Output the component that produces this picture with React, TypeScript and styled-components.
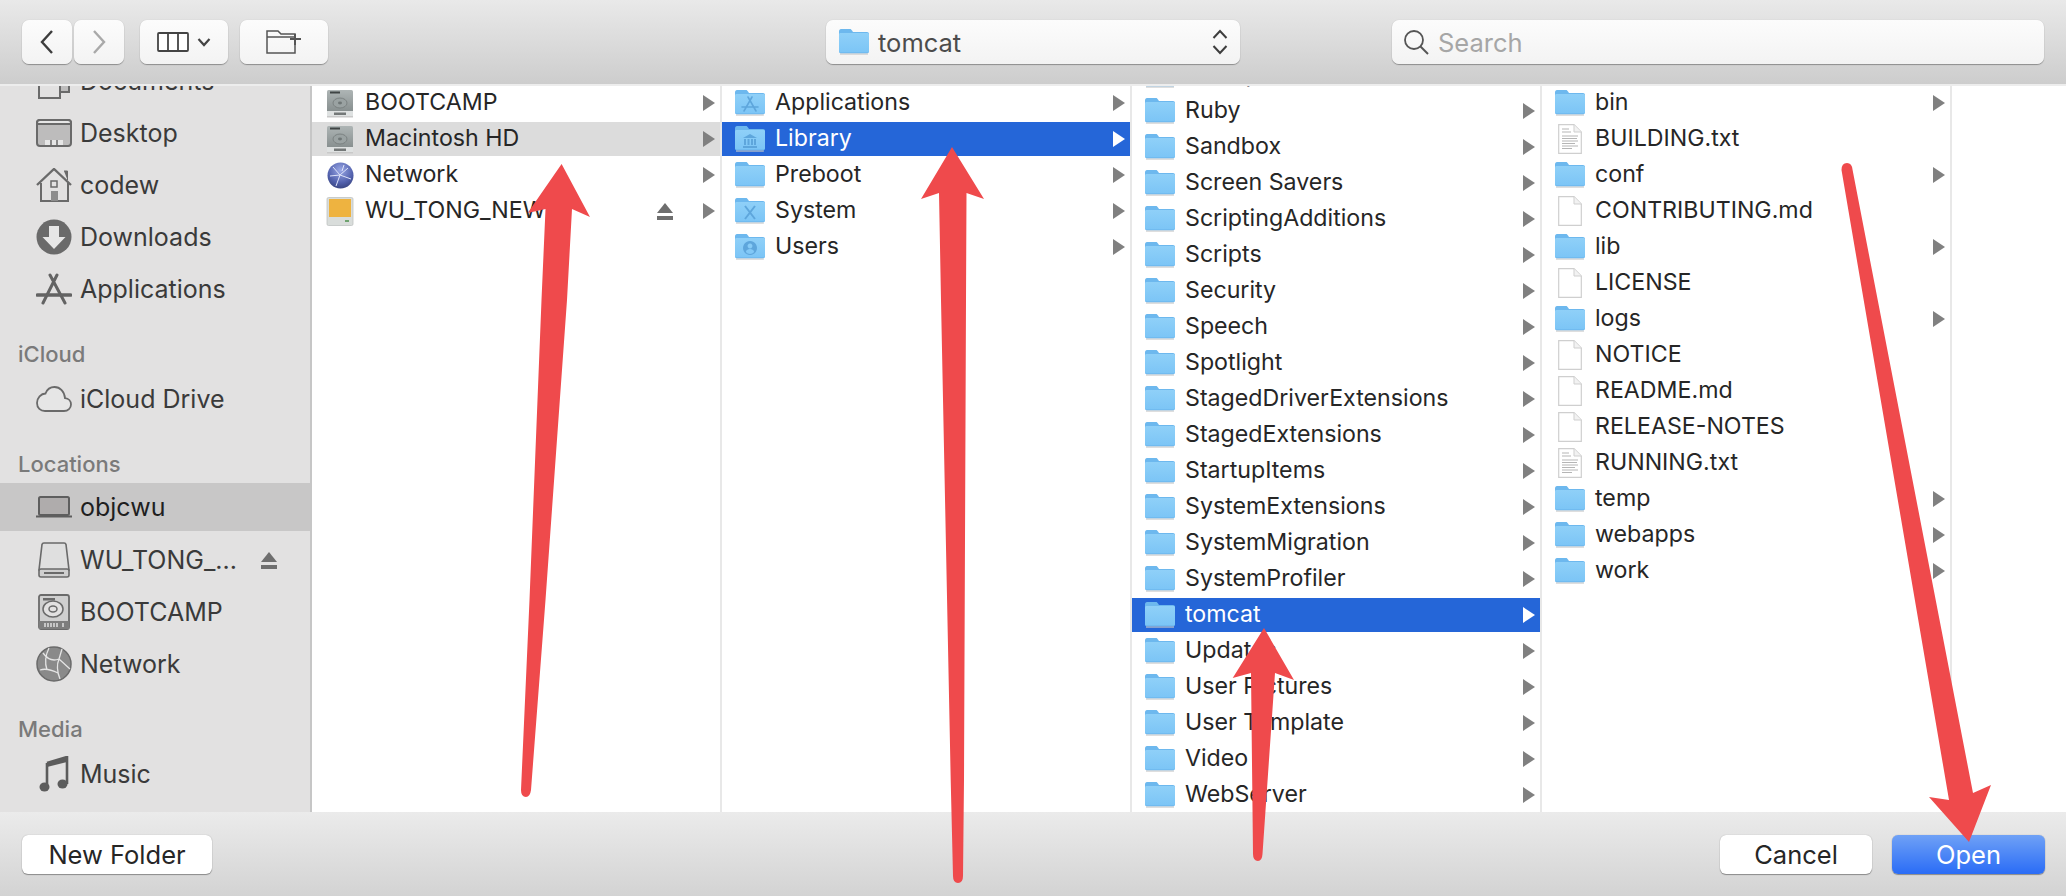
import React, { FunctionComponent, ReactNode } from 'react';
import styled, { createGlobalStyle } from 'styled-components';

const GlobalStyle = createGlobalStyle`
  html, body {
    margin: 0;
    padding: 0;
    background: #e2e1e1;
  }
  * {
    box-sizing: border-box;
  }
`;

const Window = styled.div`
  position: relative;
  width: 2066px;
  height: 896px;
  display: flex;
  flex-direction: column;
  overflow: hidden;
  font-family: Inter, "Liberation Sans", sans-serif;
`;

const Toolbar = styled.div`
  flex: none;
  height: 86px;
  display: flex;
  align-items: flex-start;
  padding: 20px 22px 0;
  background: linear-gradient(#e9e9e9, #cdcdcd);
  border-bottom: 2px solid #ededed;
  position: relative;
  z-index: 2;
`;

const ToolButton = styled.div<{ $width: number; $gap?: number }>`
  flex: none;
  width: ${({ $width }) => $width}px;
  height: 44px;
  margin-right: ${({ $gap }) => $gap ?? 0}px;
  display: flex;
  align-items: center;
  justify-content: center;
  gap: 8px;
  border-radius: 7px;
  background: linear-gradient(#fcfcfc, #f3f3f3);
  box-shadow: 0 1px 1px rgba(0, 0, 0, 0.32), 0 0 1px rgba(0, 0, 0, 0.18);
`;

const PathPopup = styled(ToolButton)`
  justify-content: flex-start;
  padding: 0 12px 0 13px;
  gap: 9px;
  margin-left: 498px;
  margin-right: 152px;
`;

const PathLabel = styled.span`
  flex: 1;
  font-size: 25.5px;
  color: #4c4c4c;
`;

const SearchBox = styled(ToolButton)`
  justify-content: flex-start;
  padding-left: 11px;
  gap: 9px;
`;

const SearchHint = styled.span`
  font-size: 25.5px;
  color: #a6a6a6;
`;

const Body = styled.div`
  flex: 1;
  min-height: 0;
  display: flex;
  background: #fff;
`;

const Sidebar = styled.div`
  flex: none;
  width: 312px;
  overflow: hidden;
  background: #e2e1e1;
  border-right: 2px solid #c6c6c6;
`;

const SidebarList = styled.div`
  margin-top: -31px;
`;

const SectionTitle = styled.div`
  height: 28px;
  line-height: 28px;
  margin: 25px 0 5px;
  padding-left: 18px;
  font-size: 22px;
  font-weight: 500;
  color: #7a7a7a;
`;

const SideRow = styled.div<{ $selected?: boolean }>`
  height: ${({ $selected }) => ($selected ? 48 : 52)}px;
  display: flex;
  align-items: center;
  padding-left: 36px;
  background: ${({ $selected }) => ($selected ? '#c8c7c7' : 'transparent')};
  margin: ${({ $selected }) => ($selected ? '1px 0 3px' : '0')};
`;

const SideIcon = styled.span`
  flex: none;
  width: 36px;
  height: 36px;
  margin-right: 8px;
  display: flex;
  align-items: center;
  justify-content: center;
`;

const SideLabel = styled.span<{ $selected?: boolean }>`
  flex: none;
  width: 181px;
  font-size: 25px;
  color: ${({ $selected }) => ($selected ? '#1f1f1f' : '#3a3a3a')};
`;

const ColumnStrip = styled.div`
  flex: 1;
  min-width: 0;
  display: flex;
`;

const Column = styled.div<{ $offset?: number }>`
  flex: none;
  width: 410px;
  height: 100%;
  overflow: hidden;
  border-right: 2px solid #e8e8e8;
  > div:first-child {
    margin-top: ${({ $offset }) => $offset ?? 0}px;
  }
`;

const FileRow = styled.div<{ $state?: 'active' | 'inactive' }>`
  height: 34px;
  margin-bottom: 2px;
  display: flex;
  align-items: center;
  padding-left: 13px;
  padding-right: 5px;
  background: ${({ $state }) =>
    $state === 'active' ? '#2566d8' : $state === 'inactive' ? '#dcdcdc' : 'transparent'};
`;

const RowIcon = styled.span`
  flex: none;
  width: 30px;
  height: 30px;
  margin-right: 10px;
  display: flex;
  align-items: center;
  justify-content: center;
`;

const RowLabel = styled.span<{ $active?: boolean }>`
  flex: 1;
  min-width: 0;
  font-size: 23.2px;
  position: relative;
  top: -1px;
  white-space: nowrap;
  color: ${({ $active }) => ($active ? '#fff' : '#262626')};
`;

const Disclosure = styled.span<{ $active?: boolean }>`
  flex: none;
  width: 0;
  height: 0;
  border-style: solid;
  border-width: 8px 0 8px 12px;
  border-color: transparent transparent transparent ${({ $active }) => ($active ? '#fff' : '#808080')};
`;

const RowEject = styled.span`
  flex: none;
  margin-right: 30px;
  display: flex;
`;

const Footer = styled.div`
  flex: none;
  height: 84px;
  display: flex;
  align-items: flex-start;
  padding: 23px 21px 0 22px;
  background: linear-gradient(#ebebeb, #d3d3d3);
  position: relative;
  z-index: 2;
`;

const PushButton = styled.div<{ $width: number; $primary?: boolean }>`
  flex: none;
  width: ${({ $width }) => $width}px;
  height: 39px;
  display: flex;
  align-items: center;
  justify-content: center;
  border-radius: 6px;
  font-size: 25.5px;
  color: ${({ $primary }) => ($primary ? '#fff' : '#262626')};
  background: ${({ $primary }) => ($primary ? 'linear-gradient(#6fa1f6, #2a6cf6)' : '#fff')};
  box-shadow: 0 1px 1px rgba(0, 0, 0, 0.35), 0 0 1px rgba(0, 0, 0, 0.3);
`;

const FooterGap = styled.div`
  flex: 1;
`;

const CancelButton = styled(PushButton)`
  margin-right: 20px;
`;

const Annotations = styled.svg`
  position: absolute;
  left: 0;
  top: 0;
  z-index: 5;
  pointer-events: none;
`;

const Eject: FunctionComponent = () => (
  <svg width="16" height="17" viewBox="0 0 16 17">
    <path d="M8 0 16 10H0Z" fill="#6e6e6e" />
    <rect y="13" width="16" height="4" fill="#6e6e6e" />
  </svg>
);

// folder badge glyphs, drawn in a darker blue on the folder front
const badges: Record<string, ReactNode> = {
  apps: (
    <g stroke="#5ea6dc" strokeWidth="1.6" fill="none" strokeLinecap="round">
      <path d="M13 7 21 21M17 7 9 21M7 17H23" />
    </g>
  ),
  library: (
    <g fill="#5ea6dc">
      <path d="M15 8 22 12H8Z" />
      <rect x="9" y="13" width="2" height="6" />
      <rect x="12.5" y="13" width="2" height="6" />
      <rect x="16" y="13" width="2" height="6" />
      <rect x="19" y="13" width="2" height="6" />
      <rect x="8" y="20" width="14" height="2" />
    </g>
  ),
  system: <path d="M10 8 20 21M20 8 10 21" stroke="#5ea6dc" strokeWidth="2" fill="none" />,
  users: (
    <g fill="#5ea6dc">
      <path d="M15 7a7 7 0 1 0 .01 0Zm0 2.600a2.400 2.400 0 1 1-.01 0ZM10.800 18c.6-2.200 2.200-3 4.200-3s3.600.8 4.200 3a5.600 5.600 0 0 1-8.400 0Z" fillRule="evenodd" />
    </g>
  ),
};

const Folder: FunctionComponent<{ badge?: string }> = ({ badge }) => (
  <svg width="30" height="26" viewBox="0 0 30 26">
    <defs>
      <linearGradient id="folderFace" x1="0" y1="0" x2="0" y2="1">
        <stop offset="0" stopColor="#8fd0f8" />
        <stop offset="1" stopColor="#7cc5f6" />
      </linearGradient>
    </defs>
    <path d="M1 24.400h28v1.200H1Z" fill="#c8c8c8" />
    <path d="M0 2.500C0 1 .8 0 2 0h9c1 0 1.400.7 2 1.600L14 3h14c1.200 0 2 .8 2 2v17.500c0 1-.7 1.700-1.700 1.700H1.700C.7 24.200 0 23.500 0 22.500Z" fill="#6db8ee" />
    <path d="M0 5.500C0 4.500.7 4 1.700 4H28.300c1 0 1.700.5 1.700 1.500V22c0 .8-.6 1.300-1.500 1.300H1.500C.6 23.300 0 22.800 0 22Z" fill="url(#folderFace)" />
    {badge && badges[badge]}
  </svg>
);

const Page: FunctionComponent<{ lines?: boolean }> = ({ lines }) => (
  <svg width="24" height="30" viewBox="0 0 24 30">
    <path d="M.7.7H16L23.300 8V29.300H.7Z" fill="#fff" stroke="#cfcfcf" strokeWidth="1.200" />
    <path d="M16 .7V8H23.300" fill="#f2f2f2" stroke="#cfcfcf" strokeWidth="1" />
    {lines && (
      <g stroke="#b5b5b5" strokeWidth="1">
        <path d="M4 5H11M4 8H13M4 12H20M4 14.500H19M4 17H20M4 19.500H17M4 22H20M4 24.500H14" />
      </g>
    )}
  </svg>
);

const HardDisk: FunctionComponent = () => (
  <svg width="28" height="29" viewBox="0 0 28 29">
    <defs>
      <linearGradient id="diskFace" x1="0" y1="0" x2="0" y2="1">
        <stop offset="0" stopColor="#aeb5b5" />
        <stop offset="1" stopColor="#7f8787" />
      </linearGradient>
    </defs>
    <rect x="1" y="1" width="26" height="26" rx="1.500" fill="url(#diskFace)" />
    <rect x="4" y="2.500" width="10" height="2" fill="#3f4444" />
    <ellipse cx="14" cy="14" rx="7" ry="5" fill="#9aa2a2" stroke="#737a7a" strokeWidth="0.800" />
    <ellipse cx="14" cy="14" rx="2" ry="1.400" fill="#6f7676" />
    <rect x="1" y="22" width="26" height="5" fill="#dfe2e2" />
    <path d="M9 23.500v2.500M11 23.500v2.500M13 23.500v2.500M15 23.500v2.500M17 23.500v2.500M19 23.500v2.500" stroke="#2e3333" strokeWidth="1.200" />
    <rect x="1" y="27" width="26" height="1.500" fill="#c9c9c9" />
  </svg>
);

const Globe: FunctionComponent = () => (
  <svg width="27" height="27" viewBox="0 0 27 27">
    <defs>
      <radialGradient id="globeFace" cx="0.5" cy="0.3" r="0.8">
        <stop offset="0" stopColor="#9aa8e6" />
        <stop offset="0.6" stopColor="#5261ad" />
        <stop offset="1" stopColor="#2f3a70" />
      </radialGradient>
    </defs>
    <circle cx="13.500" cy="13.500" r="13" fill="url(#globeFace)" />
    <path d="M6 5 13 13 21 6M13 13 9 24M13 13 24 17M3 14 13 13M17 3 15 9" stroke="#dfe4fa" strokeWidth="1" fill="none" />
  </svg>
);

const OrangeDrive: FunctionComponent = () => (
  <svg width="28" height="29" viewBox="0 0 28 29">
    <rect x="1" y="0.500" width="26" height="28" rx="1.500" fill="#d9dddb" stroke="#bfc3c1" strokeWidth="0.800" />
    <rect x="3" y="2" width="22" height="18" fill="#eeb340" />
    <rect x="19" y="23" width="4" height="2" fill="#6fa36f" />
  </svg>
);

const DesktopGlyph: FunctionComponent = () => (
  <svg width="36" height="28" viewBox="0 0 36 28">
    <rect x="1" y="1" width="34" height="26" rx="3" fill="#bdbcbc" stroke="#6a6a6a" strokeWidth="2" />
    <path d="M1 4a3 3 0 0 1 3-3h28a3 3 0 0 1 3 3v1H1Z" fill="#e6e6e6" stroke="#6a6a6a" strokeWidth="2" />
    <rect x="9" y="21" width="18" height="5" fill="#e6e6e6" />
    <path d="M15 21v5M21 21v5" stroke="#6a6a6a" strokeWidth="1.500" />
  </svg>
);

const HomeGlyph: FunctionComponent = () => (
  <svg width="36" height="34" viewBox="0 0 36 34">
    <path d="M1 17 18 1 35 17" fill="none" stroke="#6a6a6a" strokeWidth="2.400" />
    <path d="M28 3h3.500v9" fill="#6a6a6a" stroke="#6a6a6a" strokeWidth="1" />
    <path d="M5 15v18H32V15" fill="none" stroke="#6a6a6a" strokeWidth="2" />
    <rect x="15" y="13" width="6" height="6" fill="none" stroke="#6a6a6a" strokeWidth="1.500" />
    <rect x="15" y="23" width="7" height="10" fill="#8c8c8c" />
  </svg>
);

const DownloadsGlyph: FunctionComponent = () => (
  <svg width="36" height="36" viewBox="0 0 36 36">
    <circle cx="18" cy="18" r="17.500" fill="#6a6a6a" />
    <path d="M13 7h10v11h6.500L18 30 6.500 18H13Z" fill="#e6e6e6" />
  </svg>
);

const AppsGlyph: FunctionComponent = () => (
  <svg width="36" height="33" viewBox="0 0 36 33">
    <g stroke="#636363" strokeWidth="3" strokeLinecap="round" fill="none">
      <path d="M14 2 29 30M21 2 7 30" />
      <path d="M1.500 22H34.500" strokeWidth="3.600" />
    </g>
  </svg>
);

const DocumentsGlyph: FunctionComponent = () => (
  <svg width="34" height="36" viewBox="0 0 34 36">
    <path d="M11 2H24L32 10V29H11Z" fill="#bdbcbc" stroke="#6a6a6a" strokeWidth="2" />
    <path d="M2 8H15L23 16V35H2Z" fill="#e2e1e1" stroke="#6a6a6a" strokeWidth="2" />
  </svg>
);

const CloudGlyph: FunctionComponent = () => (
  <svg width="36" height="26" viewBox="0 0 36 26">
    <path d="M9 25H28C32 25 35 22 35 18.500C35 15 32.500 12.500 29 12.200C28.500 5.500 24 1 18.500 1C14 1 11 3.500 9.500 7.500C5 7.500 1 12 1 17C1 22 4.500 25 9 25Z" fill="#e6e6e6" stroke="#6a6a6a" strokeWidth="1.800" />
  </svg>
);

const LaptopGlyph: FunctionComponent = () => (
  <svg width="36" height="22" viewBox="0 0 36 22">
    <rect x="3" y="1" width="30" height="18" rx="1.500" fill="#afacac" stroke="#5e5e5e" strokeWidth="2" />
    <path d="M0 20.500H36" stroke="#5e5e5e" strokeWidth="2" />
  </svg>
);

const RemovableGlyph: FunctionComponent = () => (
  <svg width="32" height="36" viewBox="0 0 32 36">
    <path d="M4 2.500A2 2 0 0 1 6 1H26A2 2 0 0 1 28 2.500L31 28H1Z" fill="#dfdfdf" stroke="#6a6a6a" strokeWidth="1.600" />
    <rect x="1" y="27" width="30" height="8" rx="2" fill="#cfcfcf" stroke="#6a6a6a" strokeWidth="1.600" />
    <rect x="6" y="30" width="20" height="2" fill="#6a6a6a" />
  </svg>
);

const DiskGlyph: FunctionComponent = () => (
  <svg width="32" height="36" viewBox="0 0 32 36">
    <rect x="1" y="1" width="30" height="34" rx="2" fill="#cfcfcf" stroke="#6a6a6a" strokeWidth="1.800" />
    <rect x="5" y="4" width="12" height="2.500" fill="#6a6a6a" />
    <ellipse cx="15" cy="15" rx="10" ry="8" fill="#e2e1e1" stroke="#6a6a6a" strokeWidth="1.500" />
    <ellipse cx="15" cy="15" rx="4" ry="3" fill="none" stroke="#6a6a6a" strokeWidth="1.500" />
    <rect x="1" y="27" width="30" height="8" fill="#7d7d7d" />
    <path d="M7 29v4M10 29v4M13 29v4M16 29v4M19 29v4M25 29v4" stroke="#dedede" strokeWidth="1.500" />
  </svg>
);

const NetworkGlyph: FunctionComponent = () => (
  <svg width="36" height="36" viewBox="0 0 36 36">
    <circle cx="18" cy="18" r="17" fill="#8a8a8a" stroke="#6a6a6a" strokeWidth="1.500" />
    <path d="M7 7C12 14 18 15 23 13M23 13 26 3M23 13C20 20 22 28 24 33M23 13 34 23M4 24C10 22 16 24 22 27M13 2C9 10 9 18 11 24" stroke="#e4e4e4" strokeWidth="1.300" fill="none" />
  </svg>
);

const MusicGlyph: FunctionComponent = () => (
  <svg width="30" height="36" viewBox="0 0 30 36">
    <path d="M8 7 28 1V28" fill="none" stroke="#5c5c5c" strokeWidth="2.600" />
    <path d="M8 7 28 1V6L8 11Z" fill="#5c5c5c" />
    <path d="M8 7V32" stroke="#5c5c5c" strokeWidth="2.600" />
    <ellipse cx="5.500" cy="31" rx="5" ry="4.500" fill="#5c5c5c" />
    <ellipse cx="23.500" cy="28" rx="5" ry="4.500" fill="#5c5c5c" />
  </svg>
);

interface Entry {
  name: string;
  icon?: ReactNode;
  more?: boolean;
  state?: 'active' | 'inactive';
  eject?: boolean;
}

const folder = (name: string, state?: 'active' | 'inactive', badge?: string): Entry => ({
  name,
  state,
  more: true,
  icon: <Folder badge={badge} />,
});

const volumes: Entry[] = [
  { name: 'BOOTCAMP', icon: <HardDisk />, more: true },
  { name: 'Macintosh HD', icon: <HardDisk />, more: true, state: 'inactive' },
  { name: 'Network', icon: <Globe />, more: true },
  { name: 'WU_TONG_NEW', icon: <OrangeDrive />, more: true, eject: true },
];

const rootFolders: Entry[] = [
  folder('Applications', undefined, 'apps'),
  folder('Library', 'active', 'library'),
  folder('Preboot'),
  folder('System', undefined, 'system'),
  folder('Users', undefined, 'users'),
];

const libraryFolders: Entry[] = [
  folder('Receipts'),
  folder('Ruby'),
  folder('Sandbox'),
  folder('Screen Savers'),
  folder('ScriptingAdditions'),
  folder('Scripts'),
  folder('Security'),
  folder('Speech'),
  folder('Spotlight'),
  folder('StagedDriverExtensions'),
  folder('StagedExtensions'),
  folder('StartupItems'),
  folder('SystemExtensions'),
  folder('SystemMigration'),
  folder('SystemProfiler'),
  folder('tomcat', 'active'),
  folder('Updates'),
  folder('User Pictures'),
  folder('User Template'),
  folder('Video'),
  folder('WebServer'),
];

const doc = (name: string, lines?: boolean): Entry => ({ name, icon: <Page lines={lines} /> });

const tomcatFiles: Entry[] = [
  folder('bin'),
  doc('BUILDING.txt', true),
  folder('conf'),
  doc('CONTRIBUTING.md'),
  folder('lib'),
  doc('LICENSE'),
  folder('logs'),
  doc('NOTICE'),
  doc('README.md'),
  doc('RELEASE-NOTES'),
  doc('RUNNING.txt', true),
  folder('temp'),
  folder('webapps'),
  folder('work'),
];

const BrowserColumn: FunctionComponent<{ entries: Entry[]; offset?: number }> = ({ entries, offset }) => (
  <Column $offset={offset}>
    {entries.map((entry) => (
      <FileRow key={entry.name} $state={entry.state}>
        <RowIcon>{entry.icon}</RowIcon>
        <RowLabel $active={entry.state === 'active'}>{entry.name}</RowLabel>
        {entry.eject && (
          <RowEject>
            <Eject />
          </RowEject>
        )}
        {entry.more && <Disclosure $active={entry.state === 'active'} />}
      </FileRow>
    ))}
  </Column>
);

const SideItem: FunctionComponent<{ icon: ReactNode; label: string; selected?: boolean; eject?: boolean }> = ({
  icon,
  label,
  selected,
  eject,
}) => (
  <SideRow $selected={selected}>
    <SideIcon>{icon}</SideIcon>
    <SideLabel $selected={selected}>{label}</SideLabel>
    {eject && <Eject />}
  </SideRow>
);

const App: FunctionComponent = () => (
  <Window>
    <GlobalStyle />
    <Toolbar>
      <ToolButton $width={50} $gap={2}>
        <svg width="16" height="26" viewBox="0 0 16 26">
          <path d="M13 2 3 13l10 11" fill="none" stroke="#3d3d3d" strokeWidth="2.400" />
        </svg>
      </ToolButton>
      <ToolButton $width={50} $gap={16}>
        <svg width="16" height="26" viewBox="0 0 16 26">
          <path d="M3 2l10 11L3 24" fill="none" stroke="#a9a9a9" strokeWidth="2.400" />
        </svg>
      </ToolButton>
      <ToolButton $width={88} $gap={12}>
        <svg width="32" height="20" viewBox="0 0 32 20">
          <rect x="1" y="1" width="30" height="18" rx="1" fill="#fff" stroke="#444" strokeWidth="1.800" />
          <path d="M11 1v18M21 1v18" stroke="#444" strokeWidth="1.800" />
        </svg>
        <svg width="14" height="10" viewBox="0 0 14 10">
          <path d="M1.500 2 7 8l5.500-6" fill="none" stroke="#444" strokeWidth="2.200" />
        </svg>
      </ToolButton>
      <ToolButton $width={88}>
        <svg width="36" height="24" viewBox="0 0 36 24">
          <path d="M1 23V1h11l3 3h14v19Z" fill="none" stroke="#555" strokeWidth="1.500" />
          <path d="M1 7h28" stroke="#555" strokeWidth="1.500" />
          <path d="M29 4v11M24 9h11" stroke="#555" strokeWidth="2" />
        </svg>
      </ToolButton>
      <PathPopup $width={414}>
        <Folder />
        <PathLabel>tomcat</PathLabel>
        <svg width="16" height="26" viewBox="0 0 16 26">
          <path d="M1.500 9 8 2l6.500 7M1.500 17 8 24l6.500-7" fill="none" stroke="#3d3d3d" strokeWidth="2" />
        </svg>
      </PathPopup>
      <SearchBox $width={652}>
        <svg width="26" height="26" viewBox="0 0 26 26">
          <circle cx="11" cy="11" r="9" fill="none" stroke="#555" strokeWidth="1.800" />
          <path d="M17.500 17.500 25 25" stroke="#555" strokeWidth="2" />
        </svg>
        <SearchHint>Search</SearchHint>
      </SearchBox>
    </Toolbar>
    <Body>
      <Sidebar>
        <SidebarList>
          <SideItem icon={<DocumentsGlyph />} label="Documents" />
          <SideItem icon={<DesktopGlyph />} label="Desktop" />
          <SideItem icon={<HomeGlyph />} label="codew" />
          <SideItem icon={<DownloadsGlyph />} label="Downloads" />
          <SideItem icon={<AppsGlyph />} label="Applications" />
          <SectionTitle>iCloud</SectionTitle>
          <SideItem icon={<CloudGlyph />} label="iCloud Drive" />
          <SectionTitle>Locations</SectionTitle>
          <SideItem icon={<LaptopGlyph />} label="objcwu" selected />
          <SideItem icon={<RemovableGlyph />} label="WU_TONG_..." eject />
          <SideItem icon={<DiskGlyph />} label="BOOTCAMP" />
          <SideItem icon={<NetworkGlyph />} label="Network" />
          <SectionTitle>Media</SectionTitle>
          <SideItem icon={<MusicGlyph />} label="Music" />
        </SidebarList>
      </Sidebar>
      <ColumnStrip>
        <BrowserColumn entries={volumes} />
        <BrowserColumn entries={rootFolders} />
        <BrowserColumn entries={libraryFolders} offset={-28} />
        <BrowserColumn entries={tomcatFiles} />
      </ColumnStrip>
    </Body>
    <Footer>
      <PushButton $width={190}>New Folder</PushButton>
      <FooterGap />
      <CancelButton $width={152}>Cancel</CancelButton>
      <PushButton $width={153} $primary>
        Open
      </PushButton>
    </Footer>
    <Annotations width="2066" height="896" viewBox="0 0 2066 896">
      <g fill="#ef4a4c">
        <path d="M561.600 164 590 217 572 209 567 300 545.500 600 531 790Q530 797 526 797 521 797 521 790L529.500 600 541.500 300 545.500 209 527.700 213Z" />
        <path d="M952 147 984 199 966.500 193 966 300 964 780 963 876Q963 883 958 883 953 883 953 876L950.700 780 941 300 939 193 921 199Z" />
        <path d="M1264 628 1294 680 1275 673 1262.500 854Q1262 861 1258 861 1253 861 1253 854L1251 673 1232.700 678Z" />
        <path d="M1841.500 170Q1841.500 163 1847 163 1852 163 1852.600 170L1973 793 1991 785 1969 842 1929 797 1949 800Z" />
      </g>
    </Annotations>
  </Window>
);

export default App;
